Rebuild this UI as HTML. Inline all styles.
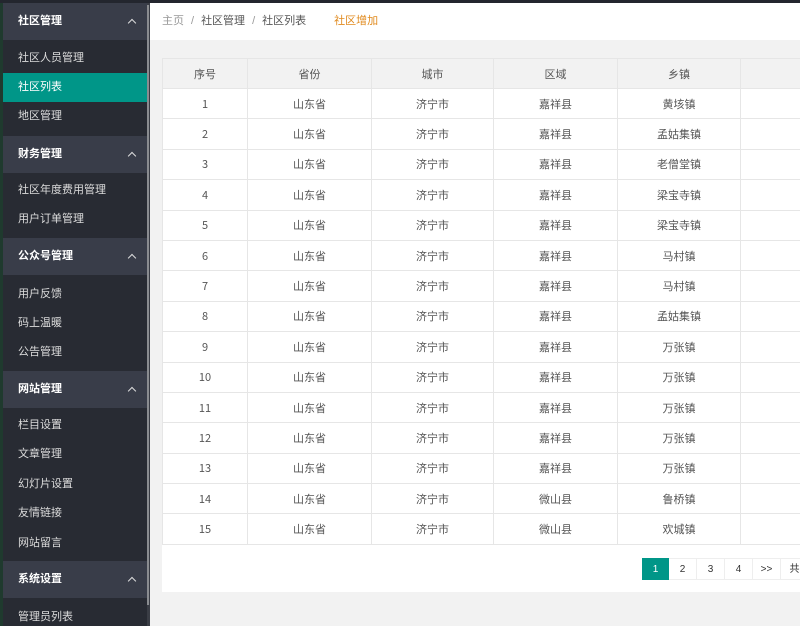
<!DOCTYPE html>
<html><head><meta charset="utf-8"><style>
*{margin:0;padding:0;box-sizing:border-box}
html,body{width:800px;height:626px;overflow:hidden}
body{background:#f2f2f2;font-family:"Liberation Sans","Noto Sans CJK SC",sans-serif;font-size:11px;position:relative}
.topbar{position:absolute;left:0;top:0;width:800px;height:3px;background:#23262e}
.side{position:absolute;left:0;top:0;width:150px;height:626px;background:#282b33}
.edge{position:absolute;left:0;top:0;width:3px;height:626px;background:#1f3a2e}
.sb{position:absolute;left:147px;top:0;width:3px;height:626px;background:#3a3d45}
.sb i{position:absolute;left:0;top:5px;width:2px;height:600px;background:#8a8c90}
.g{position:absolute;left:3px;width:144px;height:37px;background:#393d49;color:#fff;font-weight:bold;line-height:37px;padding-left:15px}
.g:after{content:"";position:absolute;right:12px;top:17px;width:5px;height:5px;border-left:1.5px solid #ddd;border-top:1.5px solid #ddd;transform:rotate(45deg)}
.it{position:absolute;left:3px;width:144px;height:29px;line-height:29px;padding-left:15px;color:#dcdcdc}
.act{background:#009688;color:#fff}
.hdr{position:absolute;left:150px;top:3px;width:650px;height:37px;background:#fff;line-height:37px;padding-left:12px;color:#555}
.hdr .s{color:#999;margin:0 7px}
.hdr .h{color:#999}
.hdr .add{color:#e08a1e;margin-left:28px}
.card{position:absolute;left:162px;top:58px;width:650px;height:534px;background:#fff}
table{border-collapse:collapse;position:absolute;left:0;top:0;width:700px;table-layout:fixed;font-family:"Noto Sans CJK SC","Liberation Sans",sans-serif}
td,th{border:1px solid #e6e6e6;text-align:center;height:30.4px;font-weight:normal;color:#555;line-height:14px;vertical-align:middle;padding:0}
th{background:#f2f2f2;height:30px}
.pg{position:absolute;top:500px;left:480px;display:flex}
.pg span{height:22px;line-height:22px;width:28px;text-align:center;border:1px solid #eee;border-left:none;color:#333;font-size:10px;background:#fff}
.pg span.on{background:#009688;color:#fff;width:27px;border:1px solid #009688}
</style></head><body>
<div class="side">
<div class="g" style="top:3px">社区管理</div>
<div class="it" style="top:44px">社区人员管理</div>
<div class="it act" style="top:73px">社区列表</div>
<div class="it" style="top:102px">地区管理</div>
<div class="g" style="top:136px">财务管理</div>
<div class="it" style="top:176px">社区年度费用管理</div>
<div class="it" style="top:205px">用户订单管理</div>
<div class="g" style="top:238px">公众号管理</div>
<div class="it" style="top:280px">用户反馈</div>
<div class="it" style="top:309px">码上温暖</div>
<div class="it" style="top:338px">公告管理</div>
<div class="g" style="top:371px">网站管理</div>
<div class="it" style="top:411px">栏目设置</div>
<div class="it" style="top:440px">文章管理</div>
<div class="it" style="top:470px">幻灯片设置</div>
<div class="it" style="top:499px">友情链接</div>
<div class="it" style="top:529px">网站留言</div>
<div class="g" style="top:561px">系统设置</div>
<div class="it" style="top:603px">管理员列表</div>
</div>
<div class="edge"></div>
<div class="sb"><i></i></div>
<div class="topbar"></div>
<div class="hdr"><span class="h">主页</span><span class="s">/</span>社区管理<span class="s">/</span>社区列表<span class="add">社区增加</span></div>
<div class="card">
<table>
<colgroup><col style="width:85px"><col style="width:124px"><col style="width:122px"><col style="width:124px"><col style="width:123px"><col style="width:122px"></colgroup>
<tr><th>序号</th><th>省份</th><th>城市</th><th>区域</th><th>乡镇</th><th></th></tr>
<tr><td>1</td><td>山东省</td><td>济宁市</td><td>嘉祥县</td><td>黄垓镇</td><td></td></tr>
<tr><td>2</td><td>山东省</td><td>济宁市</td><td>嘉祥县</td><td>孟姑集镇</td><td></td></tr>
<tr><td>3</td><td>山东省</td><td>济宁市</td><td>嘉祥县</td><td>老僧堂镇</td><td></td></tr>
<tr><td>4</td><td>山东省</td><td>济宁市</td><td>嘉祥县</td><td>梁宝寺镇</td><td></td></tr>
<tr><td>5</td><td>山东省</td><td>济宁市</td><td>嘉祥县</td><td>梁宝寺镇</td><td></td></tr>
<tr><td>6</td><td>山东省</td><td>济宁市</td><td>嘉祥县</td><td>马村镇</td><td></td></tr>
<tr><td>7</td><td>山东省</td><td>济宁市</td><td>嘉祥县</td><td>马村镇</td><td></td></tr>
<tr><td>8</td><td>山东省</td><td>济宁市</td><td>嘉祥县</td><td>孟姑集镇</td><td></td></tr>
<tr><td>9</td><td>山东省</td><td>济宁市</td><td>嘉祥县</td><td>万张镇</td><td></td></tr>
<tr><td>10</td><td>山东省</td><td>济宁市</td><td>嘉祥县</td><td>万张镇</td><td></td></tr>
<tr><td>11</td><td>山东省</td><td>济宁市</td><td>嘉祥县</td><td>万张镇</td><td></td></tr>
<tr><td>12</td><td>山东省</td><td>济宁市</td><td>嘉祥县</td><td>万张镇</td><td></td></tr>
<tr><td>13</td><td>山东省</td><td>济宁市</td><td>嘉祥县</td><td>万张镇</td><td></td></tr>
<tr><td>14</td><td>山东省</td><td>济宁市</td><td>微山县</td><td>鲁桥镇</td><td></td></tr>
<tr><td>15</td><td>山东省</td><td>济宁市</td><td>微山县</td><td>欢城镇</td><td></td></tr>
</table>
<div class="pg"><span class="on">1</span><span>2</span><span>3</span><span>4</span><span>&gt;&gt;</span><span>共</span></div>
</div>
</body></html>
